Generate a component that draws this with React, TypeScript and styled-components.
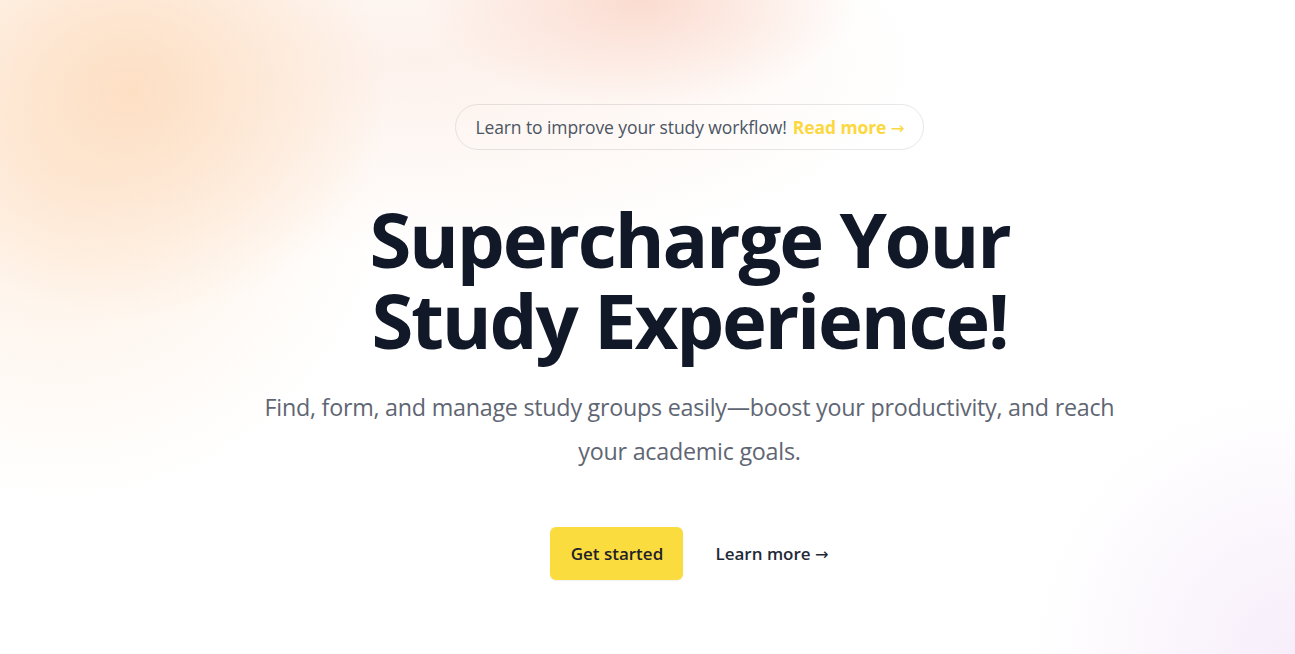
import React from "react";
import styled, { createGlobalStyle } from "styled-components";

const Global = createGlobalStyle`
  html, body { margin: 0; padding: 0; }
  body { font-family: "Open Sans", "Noto Sans", sans-serif; background: #fff; }
  * { box-sizing: border-box; }
`;

const Page = styled.main`
  width: 100%;
  min-height: 654px;
  overflow: hidden;
  display: flex;
  flex-direction: column;
  align-items: center;
  padding: 104px 0 0 84px;
  background:
    radial-gradient(ellipse 260px 230px at 130px 90px, rgba(253, 220, 190, 0.85), rgba(253, 225, 200, 0) 100%),
    radial-gradient(ellipse 330px 330px at 60px 170px, rgba(254, 232, 212, 0.7), rgba(254, 236, 220, 0) 100%),
    radial-gradient(ellipse 220px 110px at 640px 0px, rgba(250, 210, 195, 0.75), rgba(250, 215, 200, 0) 100%),
    radial-gradient(ellipse 500px 200px at 420px 60px, rgba(252, 232, 222, 0.6), rgba(252, 235, 225, 0) 100%),
    radial-gradient(ellipse 260px 260px at 1295px 654px, rgba(246, 236, 250, 0.9), rgba(246, 238, 250, 0) 100%),
    #ffffff;
`;

const Pill = styled.a`
  display: inline-flex;
  align-items: center;
  gap: 6px;
  height: 46px;
  padding: 0 18px 0 19px;
  border: 1px solid rgba(17, 24, 39, 0.1);
  border-radius: 999px;
  font-size: 17.5px;
  letter-spacing: -0.1px;
  color: #4b5563;
  text-decoration: none;
`;

const PillLink = styled.span`
  font-weight: 700;
  color: #fcd840;
`;

const Arrow = styled.span`
  font-family: "DejaVu Sans", sans-serif;
  font-weight: 400;
  font-size: 0.95em;
`;

const Heading = styled.h1`
  margin: 48px 0 0;
  font-size: 76px;
  line-height: 81px;
  font-weight: 700;
  letter-spacing: -2.2px;
  color: #111827;
  text-align: center;
`;

const Lead = styled.p`
  margin: 25px 0 0;
  max-width: 880px;
  font-size: 23.3px;
  line-height: 44px;
  color: #5f6673;
  text-align: center;
  letter-spacing: -0.25px;
`;

const Actions = styled.div`
  display: flex;
  align-items: center;
  gap: 32px;
  margin-top: 54px;
`;

const Primary = styled.a`
  display: inline-flex;
  align-items: center;
  justify-content: center;
  width: 133px;
  height: 53px;
  border-radius: 6px;
  background: #fbdc3f;
  color: #1f2228;
  font-size: 17px;
  font-weight: 600;
  text-decoration: none;
  box-shadow: 0 1px 2px rgba(0, 0, 0, 0.06);
`;

const Secondary = styled.a`
  font-size: 17px;
  font-weight: 600;
  color: #1f2937;
  text-decoration: none;
`;

export default function App() {
  return (
    <>
      <Global />
      <Page>
        <Pill href="#">
          Learn to improve your study workflow!{" "}
          <PillLink>
            Read more <Arrow>→</Arrow>
          </PillLink>
        </Pill>
        <Heading>
          Supercharge Your
          <br />
          Study Experience!
        </Heading>
        <Lead>
          Find, form, and manage study groups easily—boost your productivity, and reach your academic goals.
        </Lead>
        <Actions>
          <Primary href="#">Get started</Primary>
          <Secondary href="#">
            Learn more <Arrow>→</Arrow>
          </Secondary>
        </Actions>
      </Page>
    </>
  );
}
